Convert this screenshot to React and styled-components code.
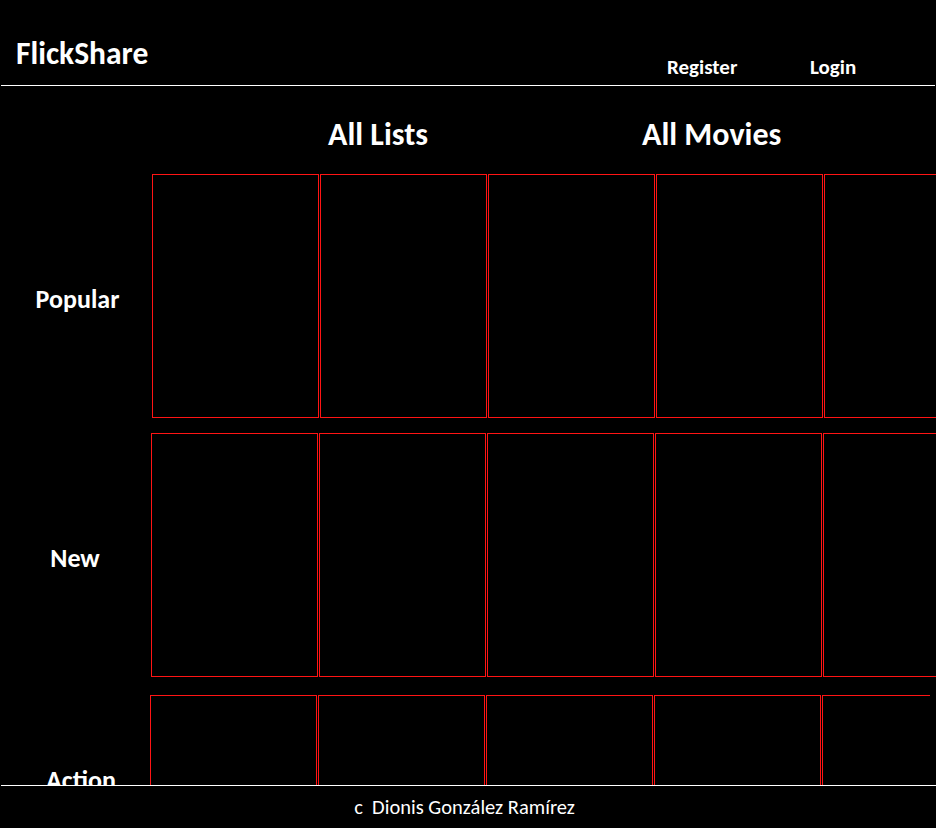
import React from "react";
import styled, { createGlobalStyle } from "styled-components";

const Global = createGlobalStyle`
  html, body {
    margin: 0;
    padding: 0;
    background: #000;
    overflow: hidden;
  }
  body {
    font-family: Carlito, Lato, "Open Sans", sans-serif;
    color: #fff;
  }
  * { box-sizing: border-box; }
`;

const Page = styled.div`
  width: 936px;
  height: 828px;
  overflow: hidden;
  background: #000;
`;

const Header = styled.header`
  display: flex;
  align-items: flex-start;
  height: 86px;
  margin: 0 1px 0 1px;
  border-bottom: 1px solid #fff;
`;

const Brand = styled.h1`
  margin: 38px 0 0 15px;
  font-size: 31.5px;
  line-height: 1;
  font-weight: 700;
`;

const Nav = styled.nav`
  display: flex;
  margin-left: auto;
  width: 268px;
  padding-top: 57px;
`;

const NavLink = styled.a`
  display: block;
  width: ${(p) => p.$width || "auto"};
  font-size: 21px;
  line-height: 1;
  font-weight: 700;
  color: #fff;
  text-decoration: none;
`;

const Headings = styled.div`
  display: flex;
  height: 88px;
  padding: 33px 0 0 328px;
`;

const Heading = styled.h2`
  margin: 0;
  width: ${(p) => p.$width || "auto"};
  font-size: 32px;
  line-height: 1;
  font-weight: 700;
`;

const Row = styled.section`
  display: flex;
  align-items: center;
  margin-top: ${(p) => p.$top || 0}px;
`;

const Label = styled.h3`
  flex: none;
  width: 150px;
  margin: 0;
  text-align: center;
  font-size: 26px;
  line-height: 1;
  font-weight: 700;
  align-self: ${(p) => (p.$offset != null ? "flex-start" : "center")};
  margin-top: ${(p) => p.$offset || 0}px;
  padding-top: ${(p) => (p.$offset != null ? 0 : 6)}px;
  padding-left: ${(p) => p.$nudge || 0}px;
`;

const Track = styled.div`
  display: flex;
  gap: 1px;
  overflow: hidden;
  margin-left: ${(p) => p.$indent || 0}px;
  width: ${(p) => p.$width || "auto"};
  flex: ${(p) => (p.$width ? "none" : "1")};
`;

const Card = styled.div`
  flex: none;
  width: 167px;
  height: 244px;
  border: 1px solid #ff1414;
  background: #000;
`;

const Footer = styled.footer`
  position: fixed;
  left: 1px;
  right: 0;
  bottom: 0;
  height: 43px;
  background: #000;
  border-top: 1px solid #fff;
  display: flex;
  align-items: center;
  justify-content: center;
  padding-right: 8px;
  font-size: 20.5px;
  white-space: pre;
`;

const rows = [
  { name: "Popular", top: 0, indent: 2, nudge: 5 },
  { name: "New", top: 15, indent: 1 },
  { name: "Action", top: 18, indent: 0, offset: 72, width: "780px", nudge: 12 },
];

export default function App() {
  return (
    <Page>
      <Global />
      <Header>
        <Brand>FlickShare</Brand>
        <Nav>
          <NavLink href="#" $width="143px">Register</NavLink>
          <NavLink href="#">Login</NavLink>
        </Nav>
      </Header>
      <Headings>
        <Heading $width="314px">All Lists</Heading>
        <Heading>All Movies</Heading>
      </Headings>
      {rows.map((r) => (
        <Row key={r.name} $top={r.top}>
          <Label $offset={r.offset} $nudge={r.nudge}>{r.name}</Label>
          <Track $indent={r.indent} $width={r.width}>
            {[0, 1, 2, 3, 4].map((i) => (
              <Card key={i} />
            ))}
          </Track>
        </Row>
      ))}
      <Footer>{"c  Dionis González Ramírez"}</Footer>
    </Page>
  );
}
